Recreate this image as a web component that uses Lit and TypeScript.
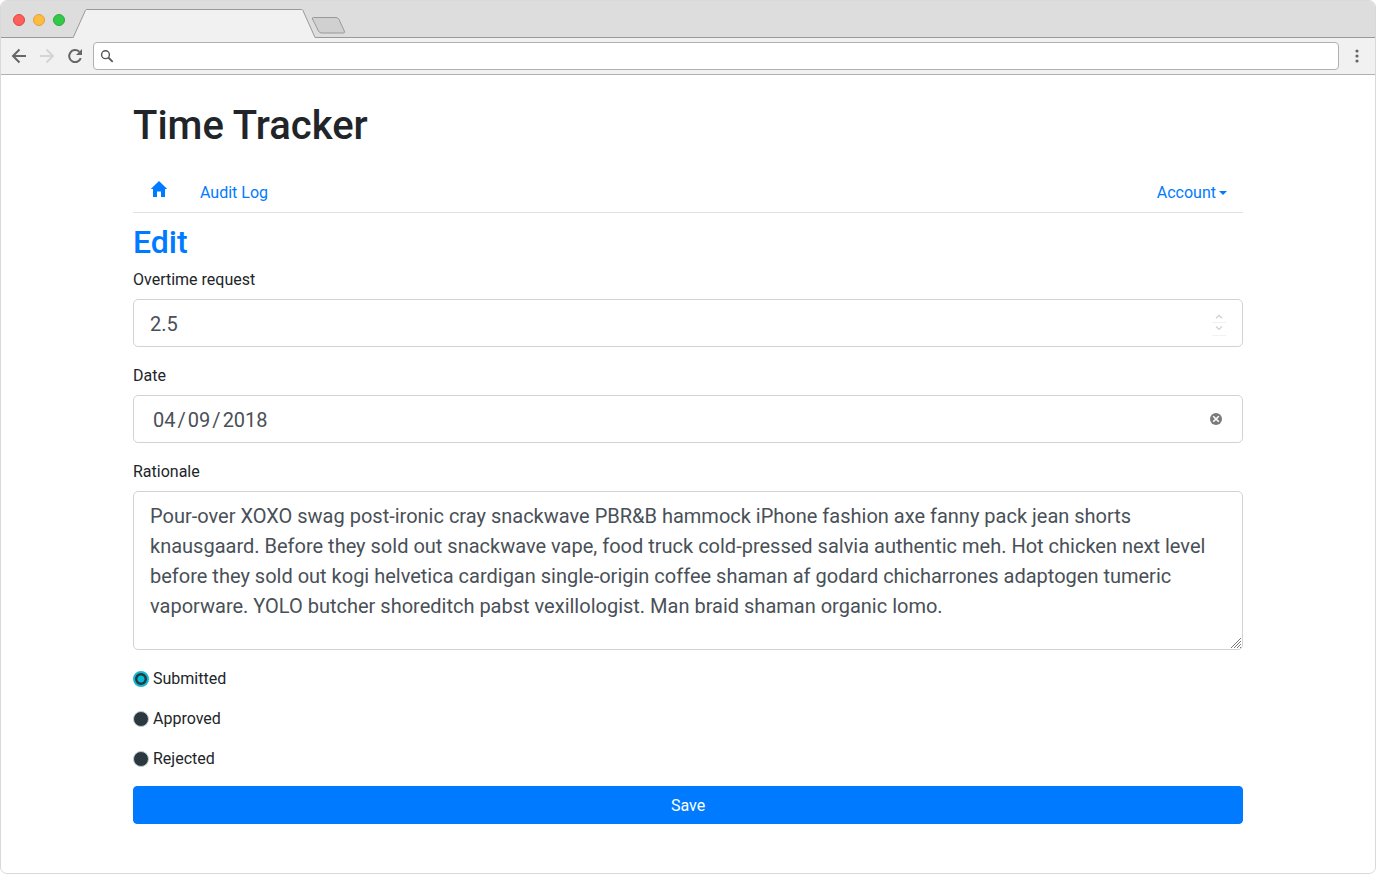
import { LitElement, html, css, svg } from "lit";
import { customElement, property, state } from "lit/decorators.js";

@customElement("browser-chrome")
export class BrowserChrome extends LitElement {
  static styles = css`
    :host {
      display: block;
    }
    .strip {
      display: flex;
      height: 37px;
      box-sizing: border-box;
      background: #ddd;
      border-bottom: 1px solid #999;
    }
    .lights {
      display: flex;
      gap: 8px;
      padding: 13px 0 0 12px;
    }
    .light {
      width: 12px;
      height: 12px;
      box-sizing: border-box;
      padding: 0;
      border: 1px solid #e04543;
      border-radius: 50%;
      background: #fe5f5b;
    }
    .minimise {
      background: #fdbc40;
      border-color: #e0a03a;
    }
    .expand {
      background: #34c84a;
      border-color: #2aab35;
    }
    .tabs {
      display: block;
      flex: none;
      margin-left: 8px;
    }
    .bar {
      display: flex;
      align-items: center;
      height: 37px;
      box-sizing: border-box;
      padding: 0 8px;
      background: #f1f1f1;
      border-bottom: 1px solid #b0b0b0;
    }
    .tool {
      display: block;
      width: 20px;
      height: 20px;
      flex: none;
      margin-right: 8px;
      padding: 0;
      border: 0;
      background: none;
      color: #666;
    }
    .tool:disabled {
      color: #d4d4d4;
    }
    .tool svg {
      display: block;
    }
    .address {
      display: flex;
      flex: 1;
      align-items: center;
      height: 28px;
      box-sizing: border-box;
      padding-left: 6px;
      border: 1px solid #b0b0b0;
      border-radius: 4px;
      background: #fff;
    }
    .address svg {
      flex: none;
    }
    .url {
      flex: 1;
      min-width: 0;
      height: 24px;
      border: 0;
      outline: 0;
      background: none;
      font: 14px Roboto, sans-serif;
    }
    .menu {
      margin: 0 0 0 8px;
    }
  `;

  render() {
    return html`
      <div class="strip">
        <div class="lights">
          <button class="light" aria-label="Close"></button>
          <button class="light minimise" aria-label="Minimise"></button>
          <button class="light expand" aria-label="Expand"></button>
        </div>
        <svg class="tabs" width="275" height="37" viewBox="0 0 275 37" aria-hidden="true">
          <path d="M0 37L.2 36.5L12.5 9.2Q12.9 8.5 13.5 8.5H228.5Q229.5 8.5 229.9 9.4L242 36.5L242.5 37Z" fill="#f1f1f1" />
          <path d="M0 36.5H.2L12.5 9.2Q12.9 8.5 13.5 8.5H228.5Q229.5 8.5 229.9 9.4L242 36.5H275" fill="none" stroke="#999" />
          <path d="M240.5 16.5H263Q265 16.5 266 18.5L271.3 30Q272 32 270.5 32H248.5Q246.5 32 245.5 30L239.5 18Q238.9 16.5 240.5 16.5Z" fill="#d0d0d0" stroke="#999" />
        </svg>
      </div>
      <div class="bar">
        <button class="tool" aria-label="Back">
          <svg width="20" height="20" viewBox="0 0 20 20" fill="none" stroke="currentColor" stroke-width="2">
            <path d="M17 10H4.5M10.5 3.5L4 10L10.5 16.5" />
          </svg>
        </button>
        <button class="tool" aria-label="Forward" disabled>
          <svg width="20" height="20" viewBox="0 0 20 20" fill="none" stroke="currentColor" stroke-width="2">
            <path d="M3 10H15.5M9.5 3.5L16 10L9.5 16.5" />
          </svg>
        </button>
        <button class="tool" aria-label="Reload">
          <svg width="20" height="20" viewBox="0 0 20 20">
            <path d="M15.8 12.2A6 6 0 1 1 14.3 5.7" fill="none" stroke="currentColor" stroke-width="2" />
            <path d="M17 3V9H11Z" fill="currentColor" />
          </svg>
        </button>
        <div class="address">
          <svg width="15" height="15" viewBox="0 0 15 15" fill="none" stroke="#555">
            <circle cx="5.5" cy="5.7" r="3.9" stroke-width="1.4" />
            <path d="M8.4 8.6L12.7 12.9" stroke-width="1.8" />
          </svg>
          <input class="url" type="text" aria-label="Address" />
        </div>
        <button class="tool menu" aria-label="Menu">
          <svg width="20" height="20" viewBox="0 0 20 20" fill="currentColor">
            <circle cx="10" cy="5" r="1.6" />
            <circle cx="10" cy="10" r="1.6" />
            <circle cx="10" cy="15" r="1.6" />
          </svg>
        </button>
      </div>
    `;
  }
}

@customElement("request-form")
export class RequestForm extends LitElement {
  @property() rationale =
    "Pour-over XOXO swag post-ironic cray snackwave PBR&B hammock iPhone fashion axe fanny pack jean shorts knausgaard. Before they sold out snackwave vape, food truck cold-pressed salvia authentic meh. Hot chicken next level before they sold out kogi helvetica cardigan single-origin coffee shaman af godard chicharrones adaptogen tumeric vaporware. YOLO butcher shoreditch pabst vexillologist. Man braid shaman organic lomo.";
  @state() private status = "Submitted";
  @state() private hours = "2.5";
  @state() private date = ["04", "09", "2018"].join("\u200a/\u200a");

  static styles = css`
    :host {
      display: block;
    }
    .group {
      margin-bottom: 17px;
    }
    .label {
      display: block;
      margin-bottom: 7px;
    }
    .field {
      position: relative;
    }
    .control {
      display: block;
      width: 100%;
      height: 48px;
      box-sizing: border-box;
      margin: 0;
      padding: 9px 16px 7px;
      border: 1px solid #ced4da;
      border-radius: 5px;
      outline: 0;
      background: #fff;
      color: #495057;
      font: 20px/30px Roboto, sans-serif;
      appearance: textfield;
    }
    .control::-webkit-inner-spin-button {
      appearance: none;
      margin: 0;
    }
    .date {
      padding-left: 19px;
    }
    .area {
      height: 159px;
      resize: vertical;
      appearance: none;
    }
    .area::-webkit-resizer {
      background: none;
    }
    .grip {
      position: absolute;
      right: 1px;
      bottom: 1px;
      pointer-events: none;
    }
    .spinner,
    .clear {
      position: absolute;
      top: 0;
      bottom: 0;
      display: flex;
      flex-direction: column;
      justify-content: center;
    }
    .spinner {
      right: 17px;
    }
    .clear {
      right: 21px;
    }
    .step,
    .reset {
      display: block;
      padding: 0;
      border: 0;
      background: none;
    }
    .step {
      height: 13px;
      border-bottom: 1px solid #f1f1f1;
    }
    .step svg,
    .reset svg {
      display: block;
    }
    .choices {
      display: flex;
      flex-direction: column;
      gap: 16px;
      margin-bottom: 15px;
    }
    .choice {
      display: flex;
      align-items: center;
      gap: 4px;
    }
    .radio {
      appearance: none;
      width: 16px;
      height: 16px;
      margin: 0;
      border: 1px solid #c0cbd1;
      border-radius: 50%;
      background: #2b3840;
      box-sizing: border-box;
    }
    .radio:checked {
      border: 2px solid #14b8d0;
      background: radial-gradient(circle, #00bcd4 3px, #263840 4px);
    }
    .save {
      display: block;
      width: 100%;
      padding: 7px 12px 5px;
      border: 1px solid #007bff;
      border-radius: 4px;
      background: #007bff;
      color: #fff;
      font: 16px/24px Roboto, sans-serif;
    }
  `;

  private step(amount: number) {
    this.hours = String(Number(this.hours) + amount);
  }

  render() {
    return html`
      <form @submit=${(e: Event) => e.preventDefault()}>
        <div class="group">
          <label class="label" for="overtime">Overtime request</label>
          <div class="field">
            <input class="control" id="overtime" type="number" step="0.5" .value=${this.hours}
              @input=${(e: Event) => (this.hours = (e.target as HTMLInputElement).value)} />
            <div class="spinner">
              ${[0.5, -0.5].map(
                (amount) => html`<button class="step" type="button"
                  aria-label=${amount > 0 ? "Increase" : "Decrease"} @click=${() => this.step(amount)}>
                  <svg width="14" height="12" viewBox="0 0 14 12" fill="none" stroke="#ccd3d8" stroke-width="1.4">
                    ${amount > 0 ? svg`<path d="M4 8.2L7 5.4L10 8.2" />` : svg`<path d="M4 3.6L7 6.4L10 3.6" />`}
                  </svg>
                </button>`
              )}
            </div>
          </div>
        </div>
        <div class="group">
          <label class="label" for="date">Date</label>
          <div class="field">
            <input class="control date" id="date" type="text" .value=${this.date}
              @input=${(e: Event) => (this.date = (e.target as HTMLInputElement).value)} />
            <div class="clear">
              <button class="reset" type="button" aria-label="Clear date" @click=${() => (this.date = "")}>
                <svg width="12" height="12" viewBox="0 0 12 12">
                  <circle cx="6" cy="6" r="6" fill="#7b7b7b" />
                  <path d="M3.2 3.2L8.8 8.8M8.8 3.2L3.2 8.8" stroke="#fff" stroke-width="1.6" />
                </svg>
              </button>
            </div>
          </div>
        </div>
        <div class="group">
          <label class="label" for="rationale">Rationale</label>
          <div class="field">
            <textarea class="control area" id="rationale" spellcheck="false" .value=${this.rationale}></textarea>
            <svg class="grip" width="12" height="12" viewBox="0 0 12 12" stroke="#777" aria-hidden="true">
              <path d="M1 11L11 1M4 11L11 4M7 11L11 7M10 11L11 10" />
            </svg>
          </div>
        </div>
        <div class="choices" role="radiogroup" aria-label="Status">
          ${["Submitted", "Approved", "Rejected"].map(
            (name) => html`<div class="choice">
              <input class="radio" type="radio" name="status" id=${name} .checked=${this.status === name}
                @change=${() => (this.status = name)} />
              <label for=${name}>${name}</label>
            </div>`
          )}
        </div>
        <button class="save" type="submit">Save</button>
      </form>
    `;
  }
}

@customElement("app-root")
export class AppRoot extends LitElement {
  static styles = css`
    :host {
      display: block;
      min-height: 100vh;
      box-sizing: border-box;
      overflow: hidden;
      border: 1px solid #d9d9d9;
      border-radius: 7px;
      background: #fff;
      color: #212529;
      font: 16px/24px Roboto, sans-serif;
    }
    .container {
      max-width: 1110px;
      margin: 0 auto;
      padding: 27px 15px 48px;
    }
    .title {
      margin: 0;
      font-size: 40px;
      font-weight: 500;
      line-height: 48px;
    }
    .nav {
      display: flex;
      margin: 22px 0 10px;
      border-bottom: 1px solid #dee2e6;
    }
    .link {
      display: block;
      padding: 9px 16px 7px;
      color: #007bff;
      text-decoration: none;
    }
    .home svg {
      display: block;
    }
    .account {
      display: flex;
      align-items: center;
      gap: 3px;
      margin-left: auto;
    }
    .caret {
      border: 4px solid transparent;
      border-top-color: currentColor;
      border-bottom: 0;
    }
    .subtitle {
      margin: 0 0 7px;
      color: #007bff;
      font-size: 32px;
      font-weight: 500;
      line-height: 38px;
    }
  `;

  render() {
    return html`
      <browser-chrome></browser-chrome>
      <main class="container">
        <h1 class="title">Time Tracker</h1>
        <nav class="nav">
          <a class="link home" href="#home" aria-label="Home">
            <svg width="19" height="24" viewBox="0 0 19 24">
              <path d="M10 0L18.2 8H16V16H12V10.5H8V16H4V8H1.8Z" fill="currentColor" />
            </svg>
          </a>
          <a class="link" href="#audit">Audit Log</a>
          <a class="link account" href="#account">Account<span class="caret"></span></a>
        </nav>
        <h2 class="subtitle">Edit</h2>
        <request-form></request-form>
      </main>
    `;
  }
}
